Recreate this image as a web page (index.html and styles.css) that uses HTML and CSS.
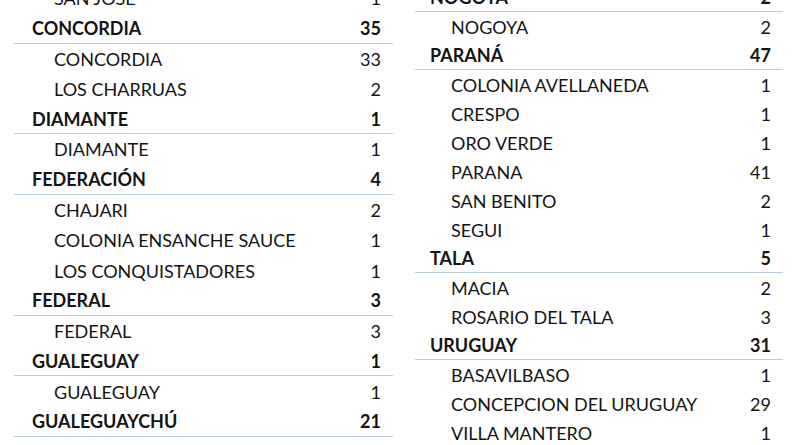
FILE: index.html
```html
<!DOCTYPE html>
<html lang="es">
<head>
<meta charset="utf-8">
<link rel="stylesheet" href="styles.css">
</head>
<body>
<div class="page">
  <div class="col col-left">
    <div class="row sub"><span>SAN JOSE</span><span>1</span></div>
    <div class="row head"><span>CONCORDIA</span><span>35</span></div>
    <div class="row sub"><span>CONCORDIA</span><span>33</span></div>
    <div class="row sub"><span>LOS CHARRUAS</span><span>2</span></div>
    <div class="row head"><span>DIAMANTE</span><span>1</span></div>
    <div class="row sub"><span>DIAMANTE</span><span>1</span></div>
    <div class="row head"><span>FEDERACIÓN</span><span>4</span></div>
    <div class="row sub"><span>CHAJARI</span><span>2</span></div>
    <div class="row sub"><span>COLONIA ENSANCHE SAUCE</span><span>1</span></div>
    <div class="row sub"><span>LOS CONQUISTADORES</span><span>1</span></div>
    <div class="row head"><span>FEDERAL</span><span>3</span></div>
    <div class="row sub"><span>FEDERAL</span><span>3</span></div>
    <div class="row head"><span>GUALEGUAY</span><span>1</span></div>
    <div class="row sub"><span>GUALEGUAY</span><span>1</span></div>
    <div class="row head"><span>GUALEGUAYCHÚ</span><span>21</span></div>
    <div class="row sub"><span>GUALEGUAYCHU</span><span>18</span></div>
  </div>
  <div class="col col-right">
    <div class="row head"><span>NOGOYA</span><span>2</span></div>
    <div class="row sub"><span>NOGOYA</span><span>2</span></div>
    <div class="row head"><span>PARANÁ</span><span>47</span></div>
    <div class="row sub"><span>COLONIA AVELLANEDA</span><span>1</span></div>
    <div class="row sub"><span>CRESPO</span><span>1</span></div>
    <div class="row sub"><span>ORO VERDE</span><span>1</span></div>
    <div class="row sub"><span>PARANA</span><span>41</span></div>
    <div class="row sub"><span>SAN BENITO</span><span>2</span></div>
    <div class="row sub"><span>SEGUI</span><span>1</span></div>
    <div class="row head"><span>TALA</span><span>5</span></div>
    <div class="row sub"><span>MACIA</span><span>2</span></div>
    <div class="row sub"><span>ROSARIO DEL TALA</span><span>3</span></div>
    <div class="row head"><span>URUGUAY</span><span>31</span></div>
    <div class="row sub"><span>BASAVILBASO</span><span>1</span></div>
    <div class="row sub"><span>CONCEPCION DEL URUGUAY</span><span>29</span></div>
    <div class="row sub"><span>VILLA MANTERO</span><span>1</span></div>
  </div>
</div>
</body>
</html>
```

FILE: styles.css
```css
html, body {
  margin: 0;
  padding: 0;
  background: #ffffff;
  overflow: hidden;
}
body {
  width: 800px;
  height: 445px;
  font-family: "Lato", "Liberation Sans", sans-serif;
  color: #141414;
}
.page {
  display: flex;
  align-items: flex-start;
}
.col {
  display: flex;
  flex-direction: column;
}
.col-left {
  margin-left: 14px;
  width: 379px;
  margin-top: -17px;
}
.col-right {
  margin-left: 22px;
  width: 368px;
  margin-top: -17px;
}
.row {
  display: flex;
  justify-content: space-between;
  align-items: center;
  box-sizing: border-box;
  font-size: 18px;
  line-height: 1;
  padding-right: 12px;
}
.col-left .row { height: 30.27px; }
.col-right .row { height: 29px; }
.row.head {
  font-weight: 700;
  border-bottom: 1.5px solid #b9cbe0;
}
.col-left .row.head { padding-left: 18px; }
.col-left .row.sub { padding-left: 40px; }
.col-right .row.head { padding-left: 15px; }
.col-right .row.sub { padding-left: 36px; }
```
